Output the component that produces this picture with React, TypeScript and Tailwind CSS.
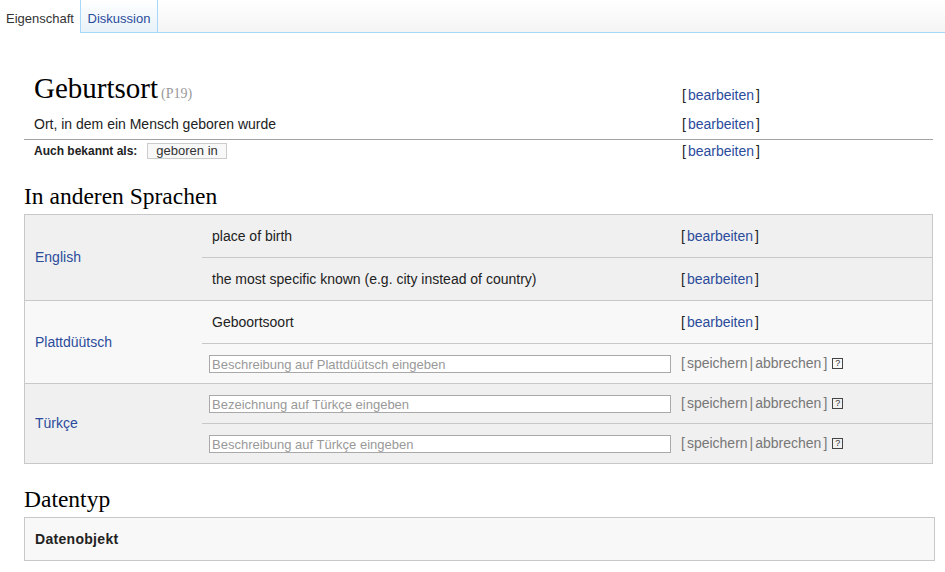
const sans = "font-['Liberation_Sans',Arial,sans-serif]";
const serif = "font-['Liberation_Serif','Times_New_Roman',serif]";

function Edit() {
  return (
    <span className="text-[14px] text-[#222]">
      [<span className="px-[2px] text-[#2b4b9b]">bearbeiten</span>]
    </span>
  );
}

function Save() {
  return (
    <span className="flex items-center text-[14px] text-[#777]">
      [<span className="px-[2px]">speichern</span>|<span className="px-[2px]">abbrechen</span>]
      <span className="ml-[5px] flex h-[11px] w-[11px] items-center justify-center border border-[#444] text-[9px] leading-none text-[#333]">
        ?
      </span>
    </span>
  );
}

function ValueRow({ text, placeholder, h, last }: { text?: string; placeholder?: string; h: string; last?: boolean }) {
  return (
    <div className={`flex items-center ${h} ${last ? "" : "border-b border-[#c8c8c8]"}`}>
      <div className="flex-1 pl-[7px] pr-[10px]">
        {text ? (
          <span className="pl-[3px] text-[14px] text-[#222]">{text}</span>
        ) : (
          <input
            placeholder={placeholder}
            className="mb-[1px] h-[18px] w-full border border-[#a9a9a9] bg-white px-[2px] text-[13px] text-[#222] placeholder:text-[#999] outline-none"
          />
        )}
      </div>
      <div className="w-[251px]">{text ? <Edit /> : <Save />}</div>
    </div>
  );
}

const languages = [
  {
    name: "English",
    bg: "bg-[#f0f0f0]",
    rows: [
      { text: "place of birth", h: "h-[43px]" },
      { text: "the most specific known (e.g. city instead of country)", h: "h-[42px]" },
    ],
  },
  {
    name: "Plattdüütsch",
    bg: "bg-[#f8f8f8]",
    rows: [
      { text: "Geboortsoort", h: "h-[43px]" },
      { placeholder: "Beschreibung auf Plattdüütsch eingeben", h: "h-[39px]" },
    ],
  },
  {
    name: "Türkçe",
    bg: "bg-[#f0f0f0]",
    rows: [
      { placeholder: "Bezeichnung auf Türkçe eingeben", h: "h-[40px]" },
      { placeholder: "Beschreibung auf Türkçe eingeben", h: "h-[39px]" },
    ],
  },
];

export default function App() {
  return (
    <div className={`min-h-screen bg-white ${sans} text-[#222]`}>
      {/* tabs */}
      <div className="flex h-[33px] bg-gradient-to-b from-white to-[#f4f4f4]">
        <div className="flex w-[80px] items-center justify-center bg-white pt-[5px] text-[13px] text-[#333]">
          Eigenschaft
        </div>
        <div className="flex flex-1 border-b border-[#a7d7f9]">
          <div className="flex w-[78px] items-center justify-center border-x border-[#a7d7f9] bg-gradient-to-b from-white to-[#e8f2f8] pt-[5px] text-[13px] text-[#2b4b9b]">
            Diskussion
          </div>
        </div>
      </div>

      <div className="pl-[24px] pr-[12px]">
        {/* header */}
        <div className="mt-[38px] pl-[10px]">
          <div className="flex">
            <div className="flex flex-1 items-baseline">
              <h1 className={`${serif} text-[29px] leading-[34px] text-black`}>Geburtsort</h1>
              <span className={`${serif} ml-[3px] text-[14px] text-[#999]`}>(P19)</span>
            </div>
            <div className="mt-[16px] w-[251px] leading-[16px]">
              <Edit />
            </div>
          </div>
          <div className="mt-[7px] flex items-center">
            <div className="flex-1 text-[14px]">Ort, in dem ein Mensch geboren wurde</div>
            <div className="w-[251px]">
              <Edit />
            </div>
          </div>
        </div>
        <div className="mt-[3px] flex h-[22px] items-center border-t border-[#a2a2a2] pl-[10px]">
          <div className="flex flex-1 items-center">
            <span className="text-[12px] font-bold">Auch bekannt als:</span>
            <span className="ml-[10px] border border-[#ccc] bg-[#f8f8f8] px-[8px] text-[13px] leading-[14px] text-[#333]">
              geboren in
            </span>
          </div>
          <div className="w-[251px]">
            <Edit />
          </div>
        </div>

        {/* other languages */}
        <h2 className={`${serif} mt-[21px] text-[23.5px] leading-[28px] text-black`}>In anderen Sprachen</h2>
        <div className="mt-[4px] border border-[#c8c8c8]">
          {languages.map((lang, i) => (
            <div
              key={lang.name}
              className={`flex ${lang.bg} ${i < languages.length - 1 ? "border-b border-[#c8c8c8]" : ""}`}
            >
              <div className="flex w-[177px] items-center pl-[10px] text-[14px] text-[#2b4b9b]">{lang.name}</div>
              <div className="flex-1">
                {lang.rows.map((r, j) => (
                  <ValueRow key={j} {...r} last={j === lang.rows.length - 1} />
                ))}
              </div>
            </div>
          ))}
        </div>

        {/* datatype */}
        <h2 className={`${serif} mt-[21px] text-[23.5px] leading-[28px] text-black`}>Datentyp</h2>
        <div className="mt-[4px] mr-[-2px] flex h-[44px] items-center border border-[#c8c8c8] bg-[#f8f8f8] pl-[10px] text-[14px] font-bold tracking-[0.3px]">
          Datenobjekt
        </div>
      </div>
    </div>
  );
}
